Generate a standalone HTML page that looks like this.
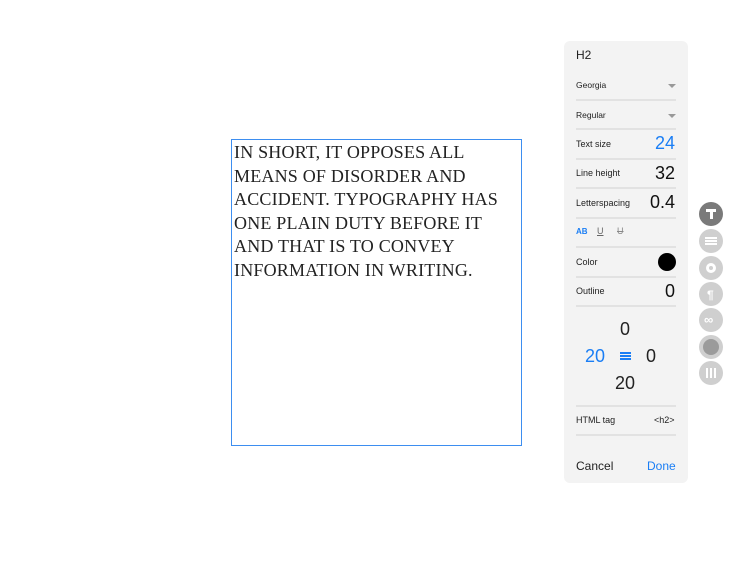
<!DOCTYPE html>
<html><head><style>
*{margin:0;padding:0;box-sizing:border-box}
body{width:752px;height:588px;background:#fff;position:relative;overflow:hidden;font-family:"Liberation Sans",sans-serif}
.box{position:absolute;left:231px;top:139px;width:291px;height:307px;border:1px solid #3d8ef0}
.txt{position:absolute;left:234px;top:141px;font-family:"Liberation Serif",serif;font-size:18px;line-height:23.5px;color:#222;letter-spacing:0.2px;white-space:pre}
.panel{position:absolute;left:564px;top:41px;width:124px;height:442px;background:#f3f3f3;border-radius:6px}
.a{position:absolute;color:#222}
.sep{position:absolute;left:576px;width:100px;height:2px;background:#e2e2e2}
.lbl{position:absolute;left:576px;font-size:9px;color:#222}
.val{position:absolute;right:77px;font-size:18px;color:#111}
.tri{position:absolute;left:668px;width:0;height:0;border-left:4px solid transparent;border-right:4px solid transparent;border-top:4px solid #999}
.c{position:absolute;left:699px;width:24px;height:24px;border-radius:50%;background:#cfcfcf}
</style></head><body>
<div class="box"></div>
<div class="txt">IN SHORT, IT OPPOSES ALL
MEANS OF DISORDER AND
ACCIDENT. TYPOGRAPHY HAS
ONE PLAIN DUTY BEFORE IT
AND THAT IS TO CONVEY
INFORMATION IN WRITING.</div>
<div class="panel"></div>
<div class="a" style="left:576px;top:48px;font-size:12px">H2</div>
<div class="lbl" style="top:80px;font-size:8.5px">Georgia</div><div class="tri" style="top:84px"></div>
<div class="sep" style="top:99px"></div>
<div class="lbl" style="top:110px;font-size:8.5px">Regular</div><div class="tri" style="top:114px"></div>
<div class="sep" style="top:128px"></div>
<div class="lbl" style="top:139px">Text size</div><div class="val" style="top:133px;color:#1a7ef5">24</div>
<div class="sep" style="top:158px"></div>
<div class="lbl" style="top:168px">Line height</div><div class="val" style="top:163px">32</div>
<div class="sep" style="top:187px"></div>
<div class="lbl" style="top:198px">Letterspacing</div><div class="val" style="top:192px">0.4</div>
<div class="sep" style="top:217px"></div>
<div class="a" style="left:576px;top:227px;font-size:8px;font-weight:bold;color:#1a7ef5">AB</div>
<div class="a" style="left:597px;top:226px;font-size:9px;color:#666;text-decoration:underline">U</div>
<div class="a" style="left:617px;top:226px;font-size:9px;color:#888;text-decoration:line-through">U</div>
<div class="sep" style="top:246px"></div>
<div class="lbl" style="top:257px">Color</div>
<div style="position:absolute;left:658px;top:253px;width:18px;height:18px;border-radius:50%;background:#000"></div>
<div class="sep" style="top:276px"></div>
<div class="lbl" style="top:286px">Outline</div><div class="val" style="top:281px">0</div>
<div class="sep" style="top:305px"></div>
<div class="a" style="left:620px;top:319px;font-size:18px">0</div>
<div class="a" style="left:585px;top:346px;font-size:18px;color:#1a7ef5">20</div>
<div style="position:absolute;left:620px;top:352px;width:11px;height:2px;background:#1a7ef5;box-shadow:0 3px 0 #1a7ef5,0 6px 0 #1a7ef5"></div>
<div class="a" style="left:646px;top:346px;font-size:18px">0</div>
<div class="a" style="left:615px;top:373px;font-size:18px">20</div>
<div class="sep" style="top:405px"></div>
<div class="lbl" style="top:415px">HTML tag</div><div class="a" style="left:654px;top:415px;font-size:9px">&lt;h2&gt;</div>
<div class="sep" style="top:434px"></div>
<div class="a" style="left:576px;top:459px;font-size:12px">Cancel</div>
<div class="a" style="left:647px;top:459px;font-size:12px;color:#1a7ef5">Done</div>
<div class="c" style="top:202px;background:#7a7a7a"><div style="position:absolute;left:7px;top:7px;width:10px;height:3px;background:#fff"></div><div style="position:absolute;left:10.5px;top:7px;width:3px;height:10px;background:#fff"></div></div>
<div class="c" style="top:229px"><div style="position:absolute;left:6px;top:8px;width:12px;height:1.5px;background:#fff;box-shadow:0 3px 0 #fff,0 6px 0 #fff"></div></div>
<div class="c" style="top:256px"><div style="position:absolute;left:7px;top:7px;width:10px;height:10px;border-radius:50%;border:3px solid #fff"></div></div>
<div class="c" style="top:282px"><div style="position:absolute;left:8px;top:6px;color:#fff;font-size:12px;font-weight:bold">¶</div></div>
<div class="c" style="top:308px"><div style="position:absolute;left:5px;top:4px;color:#fff;font-size:13px;font-weight:bold">∞</div></div>
<div class="c" style="top:335px"><div style="position:absolute;left:4px;top:4px;width:16px;height:16px;border-radius:50%;background:#9b9b9b"></div></div>
<div class="c" style="top:361px"><div style="position:absolute;left:7px;top:7px;width:1.5px;height:10px;background:#fff;box-shadow:4px 0 0 #fff,8px 0 0 #fff"></div></div>
</body></html>
